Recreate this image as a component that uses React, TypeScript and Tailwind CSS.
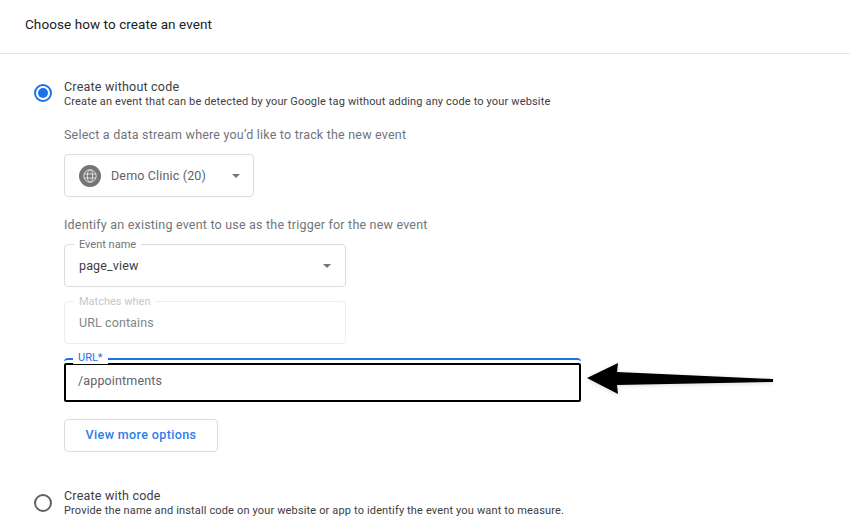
import { ReactNode } from 'react'

function Caret() {
  return <div className="w-0 h-0 border-x-[4.5px] border-x-transparent border-t-[4.5px] border-t-[#757575]" />
}

function GlobeIcon() {
  return (
    <svg width="22" height="22" viewBox="0 0 22 22" fill="none">
      <circle cx="11" cy="11" r="11" fill="#757575" />
      <g stroke="#e8eaed" strokeWidth="0.9">
        <circle cx="11" cy="11" r="6.2" />
        <ellipse cx="11" cy="11" rx="2.7" ry="6.2" />
        <path d="M5.2 9h11.6M5.2 13h11.6" />
      </g>
    </svg>
  )
}

function OutlinedField({ label, muted, children }: { label: string; muted?: boolean; children: ReactNode }) {
  return (
    <div className={`relative w-[282px] h-[43px] rounded border flex items-center justify-between pl-[14px] pr-[14px] ${muted ? 'border-[#eceded]' : 'border-[#dadce0]'}`}>
      <span className={`absolute left-[9px] -top-[6px] bg-white px-[5px] text-[11px] leading-3 ${muted ? 'text-[#c4c7c9]' : 'text-[#70757a]'}`}>
        {label}
      </span>
      {children}
    </div>
  )
}

export default function App() {
  return (
    <div className="w-[850px] h-[528px] overflow-hidden bg-white font-['Roboto',sans-serif]">
      {/* Header */}
      <div className="h-[54px] pl-[25px] pt-[15px] border-b border-[#e3e4e6]">
        <h1 className="text-[13.5px] leading-[18px] tracking-[0.08px] text-[#202124]">Choose how to create an event</h1>
      </div>

      <div className="pt-[24px] pl-[34px]">
        {/* Without code */}
        <div className="flex gap-[12px]">
          <div className="mt-[6px] w-[18px] h-[18px] rounded-full border-2 border-[#1a73e8] flex items-center justify-center shrink-0">
            <div className="w-[10px] h-[10px] rounded-full bg-[#1a73e8]" />
          </div>
          <div>
            <p className="text-[12.5px] leading-[17px] tracking-[0.2px] text-[#3c4043]">Create without code</p>
            <p className="text-[11px] leading-[14px] tracking-[0.15px] text-[#3c4043]">
              Create an event that can be detected by your Google tag without adding any code to your website
            </p>

            <p className="mt-[17px] text-[12.5px] leading-[17px] tracking-[0.2px] text-[#70757a]">
              Select a data stream where you’d like to track the new event
            </p>
            <div className="mt-[11px] w-[190px] h-[43px] rounded border border-[#dadce0] flex items-center pl-[14px] pr-[13px]">
              <GlobeIcon />
              <span className="ml-[10px] pt-[2px] text-[12.5px] tracking-[0.16px] text-[#5f6368]">Demo Clinic (20)</span>
              <div className="ml-auto">
                <Caret />
              </div>
            </div>

            <p className="mt-[19px] mb-[11px] text-[12.5px] leading-[17px] tracking-[0.2px] text-[#70757a]">
              Identify an existing event to use as the trigger for the new event
            </p>
            <OutlinedField label="Event name">
              <span className="pt-[2px] text-[12.5px] tracking-[0.15px] text-[#3c4043]">page_view</span>
              <Caret />
            </OutlinedField>
            <div className="mt-[14px]">
              <OutlinedField label="Matches when" muted>
                <span className="pt-[2px] text-[12.5px] tracking-[0.1px] text-[#80868b]">URL contains</span>
              </OutlinedField>
            </div>

            {/* URL field with the black highlight box */}
            <div className="relative mt-[14px] w-[517px] h-[45px] rounded-t border-t-2 border-[#1a73e8]">
              <span className="absolute left-[9px] -top-[8px] bg-white px-[5px] text-[11px] leading-3 text-[#1a73e8]">URL*</span>
              <div className="mt-[3px] h-[39px] border-[2.5px] border-black rounded-[2px] flex items-center pl-[12px] pb-[2px]">
                <span className="text-[12.5px] tracking-[0.15px] text-[#5f6368]">/appointments</span>
              </div>
            </div>

            <button className="mt-[16px] w-[154px] h-[33px] rounded border border-[#dadce0] text-[12.5px] tracking-[0.38px] font-medium text-[#2b7de9]">
              View more options
            </button>
          </div>
        </div>

        {/* With code */}
        <div className="flex gap-[12px] mt-[35px]">
          <div className="mt-[7px] w-[18px] h-[18px] rounded-full border-2 border-[#5f6368] shrink-0" />
          <div>
            <p className="text-[12.5px] leading-[17px] tracking-[0.2px] text-[#3c4043]">Create with code</p>
            <p className="text-[11px] leading-[14px] tracking-[0.15px] text-[#3c4043]">
              Provide the name and install code on your website or app to identify the event you want to measure.
            </p>
          </div>
        </div>
      </div>

      {/* Annotation arrow */}
      <svg className="absolute left-[580px] top-[355px] drop-shadow-sm" width="200" height="50" viewBox="0 0 200 50">
        <path d="M7 23 L38 8 L37 17 L193 24 L193 27 L37 30 L38 39 Z" fill="#000" />
      </svg>
    </div>
  )
}
